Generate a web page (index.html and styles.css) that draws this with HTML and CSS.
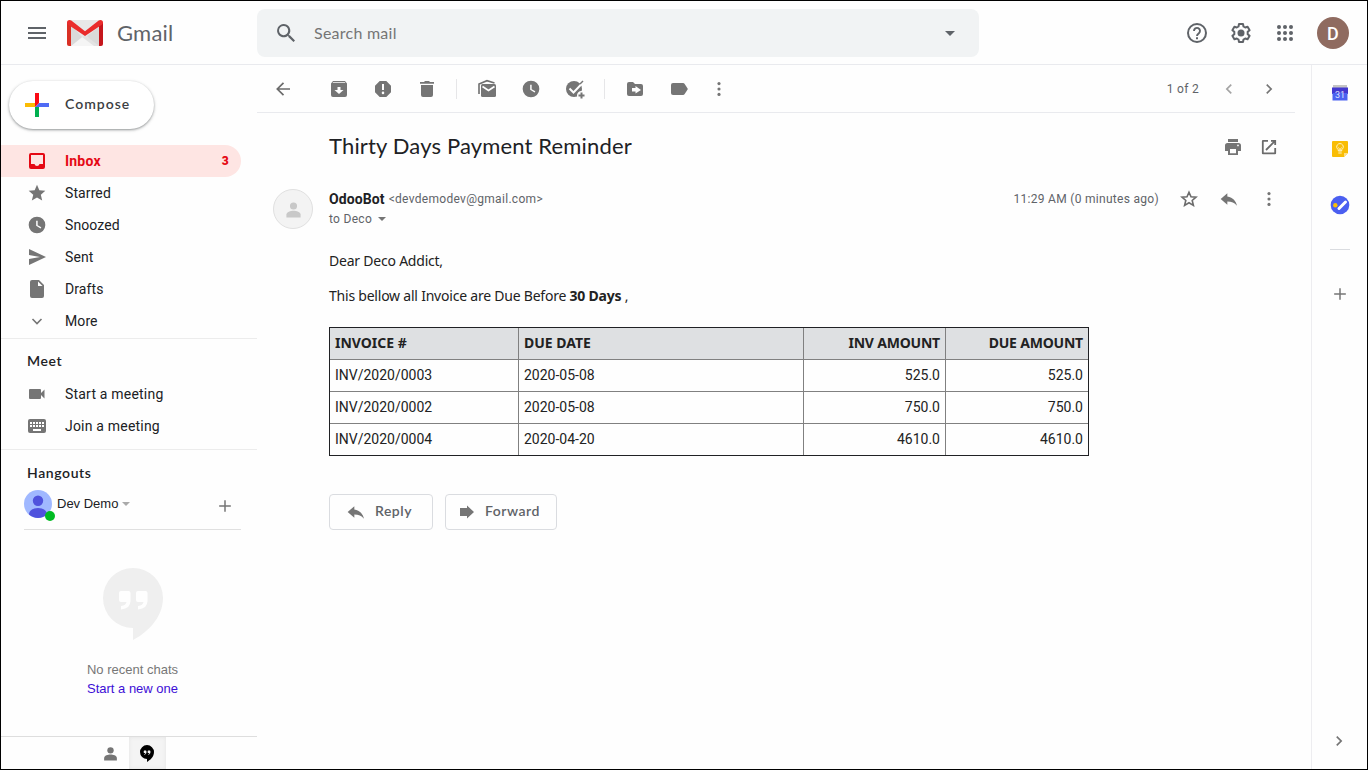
FILE: index.html
```html
<!DOCTYPE html>
<html lang="en">
<head>
<meta charset="utf-8">
<title>Thirty Days Payment Reminder - Gmail</title>
<link rel="stylesheet" href="styles.css">
</head>
<body>
<svg class="defs" aria-hidden="true">
  <symbol id="clock" viewBox="0 0 24 24"><path fill-rule="evenodd" d="M12 2a10 10 0 1 0 0 20 10 10 0 0 0 0-20zM11 7h1.800v5.200l4.400 2.600-.9 1.500L11 13z"/></symbol>
  <symbol id="dots" viewBox="0 0 24 24"><circle cx="12" cy="5.500" r="1.900"/><circle cx="12" cy="12" r="1.900"/><circle cx="12" cy="18.500" r="1.900"/></symbol>
  <symbol id="reply" viewBox="0 0 24 24"><path d="M10 9V5l-8 7 8 7v-4.100c5 0 8.900 1.600 11.500 5.100-1-5-4.500-10-11.500-11z"/></symbol>
  <symbol id="plus" viewBox="0 0 24 24"><path d="M19 12.900h-6.100V19h-1.800v-6.100H5v-1.800h6.100V5h1.800v6.100H19z"/></symbol>
  <symbol id="right" viewBox="0 0 24 24"><path d="M10 6 8.600 7.400l4.600 4.600-4.600 4.600L10 18l6-6z"/></symbol>
  <symbol id="caret" viewBox="0 0 10 5"><path d="M0 0h10L5 5z"/></symbol>
  <symbol id="person" viewBox="0 0 24 24"><circle cx="12" cy="7.500" r="4.500"/><path d="M12 13.500c-3.600 0-9 1.600-9 5V22h18v-3.500c0-3.400-5.400-5-9-5z"/></symbol>
  <symbol id="quote" viewBox="0 0 60 72"><path fill-rule="evenodd" d="M30 0a30 30 0 0 0 0 60v12c12-6 30-21 30-42A30 30 0 0 0 30 0zM18 23h7.500q2 0 2 2v8q0 7.500-9.500 8.500v-3.500q5-.5 5.500-4H18q-2 0-2-2v-7q0-2 2-2zm17 0h7.500q2 0 2 2v8q0 7.500-9.500 8.500v-3.500q5-.5 5.500-4H35q-2 0-2-2v-7q0-2 2-2z"/></symbol>
</svg>
<div class="app">
  <header class="header">
    <svg class="menu" viewBox="0 0 18 12"><path d="M0 0h18v2H0zm0 5h18v2H0zm0 5h18v2H0z"/></svg>
    <svg class="logo" viewBox="0 0 36 26">
      <path fill="#e8e8e8" d="M2 0h32v26H2z"/>
      <path fill="#f5f5f5" d="M4 26 18 15l14 11z"/>
      <path fill="#dadada" d="m4 5 11 12L4 26zM32 7v19h-4L20 16z"/>
      <path fill="#e3e3e3" d="m15 17 3-2 14 11h-5z"/>
      <path fill="#d93025" d="M0 2v22q0 2 2 2h2V5z"/>
      <path fill="#c5161c" d="M36 2v22q0 2-2 2h-2V5z"/>
      <path fill="#ea2c2c" d="M0 2.500Q0 0 2.500 0q1 0 1.800.6L18 11.200 31.700.6Q32.500 0 33.500 0 36 0 36 2.500q0 1.400-1.200 2.300L18 16 1.200 4.800Q0 3.900 0 2.500z"/>
    </svg>
    <span class="brand">Gmail</span>
    <div class="search">
      <svg class="glass" viewBox="0 0 18 18"><path fill-rule="evenodd" d="M12.900 11.300h-.9l-.3-.3a6.600 6.600 0 1 0-.7.7l.3.3v.9l5.200 5.100 1.500-1.500zM6.600 11.200a4.600 4.600 0 1 1 0-9.200 4.600 4.600 0 0 1 0 9.200z"/></svg>
      <span class="placeholder">Search mail</span>
      <svg class="search-caret"><use href="#caret"/></svg>
    </div>
    <div class="account">
      <svg class="i24" viewBox="0 0 24 24"><circle cx="12" cy="12" r="9" fill="none" stroke="#5f6368" stroke-width="2"/><path d="M9 10a3 3 0 1 1 4.900 2.200c-1.100.9-1.900 1.400-1.900 2.800" fill="none" stroke="#5f6368" stroke-width="1.900"/><path d="M11 16.200h2v2h-2z"/></svg>
      <svg class="i24" viewBox="0 0 24 24"><path d="m10 3-.5 2.500-1.700 1-2.400-.8-2 3.500 1.900 1.600v2.400l-1.900 1.600 2 3.500 2.400-.8 1.700 1L10 21h4l.5-2.500 1.700-1 2.400.8 2-3.500-1.900-1.600v-2.400l1.900-1.600-2-3.500-2.400.8-1.700-1L14 3z" fill="none" stroke="#5f6368" stroke-width="2" stroke-linejoin="round"/><circle cx="12" cy="12" r="3.500"/></svg>
      <svg class="i24" viewBox="0 0 24 24"><g><circle cx="6" cy="6" r="2"/><circle cx="12" cy="6" r="2"/><circle cx="18" cy="6" r="2"/><circle cx="6" cy="12" r="2"/><circle cx="12" cy="12" r="2"/><circle cx="18" cy="12" r="2"/><circle cx="6" cy="18" r="2"/><circle cx="12" cy="18" r="2"/><circle cx="18" cy="18" r="2"/></g></svg>
      <span class="avatar">D</span>
    </div>
  </header>
  <div class="body">
    <aside class="sidebar">
      <div class="compose">
        <svg class="i24" viewBox="0 0 24 24"><path fill="#fbbc04" d="M0 10h10v4H0z"/><path fill="#4f6bf5" d="M14 10h10v4H10z"/><path fill="#00b050" d="M10 14h4v10h-4z"/><path fill="#fa0a14" d="M10 0h4v10l-4 4z"/></svg>
        <span>Compose</span>
      </div>
      <nav class="nav">
        <div class="item active"><svg class="i20" viewBox="0 0 20 20"><path fill-rule="evenodd" d="M4 2h12q2 0 2 2v12q0 2-2 2H4q-2 0-2-2V4q0-2 2-2zm0 2v9h3.500q.5 2 2.500 2t2.500-2H16V4z"/></svg><span>Inbox</span><b class="count">3</b></div>
        <div class="item"><svg class="i20" viewBox="0 0 24 24"><path d="m12 17.300 6.200 3.700-1.600-7L22 9.200l-7.200-.6L12 2 9.200 8.600 2 9.200 7.500 14l-1.700 7z"/></svg><span>Starred</span></div>
        <div class="item"><svg class="i20"><use href="#clock"/></svg><span>Snoozed</span></div>
        <div class="item"><svg class="i20" viewBox="0 0 20 20"><path d="M2 2v6l11 2-11 2v6l17-8z"/></svg><span>Sent</span></div>
        <div class="item"><svg class="i20" viewBox="0 0 20 20"><path fill-rule="evenodd" d="M5 1h7l5 5v11q0 2-2 2H5q-2 0-2-2V3q0-2 2-2zm6 1.500V7h4.500z"/></svg><span>Drafts</span></div>
        <div class="item"><svg class="i20" viewBox="0 0 20 20"><path d="m5.500 8 4.500 4.500L14.500 8" fill="none" stroke="#757575" stroke-width="1.600"/></svg><span>More</span></div>
      </nav>
      <section class="meet">
        <h2>Meet</h2>
        <div class="item"><svg class="i20" viewBox="0 0 20 20"><path d="M3 5h10q1 0 1 1v3l3.500-3.500v9L14 11v3q0 1-1 1H3q-1 0-1-1V6q0-1 1-1z"/></svg><span>Start a meeting</span></div>
        <div class="item"><svg class="i20" viewBox="0 0 20 20"><rect x="1" y="3" width="18" height="14" rx="2"/><path fill="#fff" d="M3 6h2v2H3zm3 0h2v2H6zm3 0h2v2H9zm3 0h2v2h-2zm3 0h2v2h-2zM3 9h2v2H3zm3 0h2v2H6zm3 0h2v2H9zm3 0h2v2h-2zm3 0h2v2h-2zM6 13h8v2H6z"/></svg><span>Join a meeting</span></div>
      </section>
      <section class="hangouts">
        <h2>Hangouts</h2>
        <div class="user">
          <div class="user-pic"><svg viewBox="0 0 28 28"><circle cx="14" cy="14" r="14" fill="#a0b8ff"/><circle cx="14" cy="10.800" r="5.200" fill="#4f52dd"/><path fill="#4f52dd" d="M5 24.500c0-4 4-6.500 9-6.500s9 2.500 9 6.500A14 14 0 0 1 14 28a14 14 0 0 1-9-3.500z"/></svg><i class="online"></i></div>
          <span>Dev Demo</span>
          <svg class="user-caret"><use href="#caret"/></svg>
          <svg class="user-plus"><use href="#plus"/></svg>
        </div>
        <div class="chats">
          <svg class="bubble"><use href="#quote"/></svg>
          <p>No recent chats</p>
          <p class="link">Start a new one</p>
        </div>
      </section>
      <footer class="tabs">
        <div class="tab"><svg class="tab-person"><use href="#person"/></svg></div>
        <div class="tab selected"><svg class="tab-quote"><use href="#quote"/></svg></div>
      </footer>
    </aside>
    <main class="main">
      <div class="toolbar">
        <svg class="i20 back" viewBox="0 0 20 20"><path d="M17 10H4.500m6-6.200L4.300 10l6.200 6.200" fill="none" stroke="#6b6b6b" stroke-width="1.700"/></svg>
        <div class="tools">
          <svg class="i20" viewBox="0 0 20 20"><path fill-rule="evenodd" d="M4 2h12l2 2.500V16q0 2-2 2H4q-2 0-2-2V4.500zm.2 1.200L3.500 4h13l-.7-.8zM8.500 8v3H5.500L10 15l4.500-4h-3V8z"/></svg>
          <svg class="i20" viewBox="0 0 20 20"><path fill-rule="evenodd" d="M6.700 2h6.600L18 6.700v6.600L13.300 18H6.700L2 13.300V6.700zM9 5v6h2V5zm1 7.600a1.300 1.300 0 1 0 0 2.600 1.300 1.300 0 0 0 0-2.600z"/></svg>
          <svg class="i20" viewBox="0 0 20 20"><path d="M4 6h12v10q0 2-2 2H6q-2 0-2-2zM3 3h4l1-1h4l1 1h4v1.700H3z"/></svg>
        </div>
        <i class="sep"></i>
        <div class="tools">
          <svg class="i20" viewBox="0 0 20 20"><path d="M2 15V5l8-3.300L17.500 4" fill="none" stroke="#6f6f6f" stroke-width="1.600"/><rect x="4" y="5" width="15" height="13" rx="1.500"/><path d="m5.500 7.500 6 4 6-4" fill="none" stroke="#fff" stroke-width="1.700"/></svg>
          <svg class="i20"><use href="#clock"/></svg>
          <svg class="i20" viewBox="0 0 20 20"><circle cx="9" cy="10" r="8"/><path d="m4.500 9.500 4 4 9.500-10" fill="none" stroke="#fefefe" stroke-width="2"/><path d="m15 5 3-3" stroke="#757575" stroke-width="1.500"/><circle cx="16.500" cy="16.500" r="4.500" fill="#fefefe"/><path d="M16.500 13.500v6m-3-3h6" fill="none" stroke="#757575" stroke-width="2"/></svg>
        </div>
        <i class="sep"></i>
        <div class="tools">
          <svg class="i20" viewBox="0 0 20 20"><path fill-rule="evenodd" d="M4 3h4l2 2h6q2 0 2 2v8q0 2-2 2H4q-2 0-2-2V5q0-2 2-2zm6.500 4v2H7v3.500h3.500v2L16 11z"/></svg>
          <svg class="i20" viewBox="0 0 20 20"><path d="M4 4h10q1 0 1.700 1l3.200 5-3.200 5q-.7 1-1.700 1H4q-2 0-2-2V6q0-2 2-2z"/></svg>
          <svg class="i20 more-actions"><use href="#dots"/></svg>
        </div>
        <span class="pager">1 of 2</span>
        <svg class="i20 prev"><use href="#right"/></svg>
        <svg class="i20 next"><use href="#right"/></svg>
      </div>
      <div class="subject">
        <h1>Thirty Days Payment Reminder</h1>
        <svg class="i20" viewBox="0 0 20 20"><path fill-rule="evenodd" d="M5 2h10v3H5zM4.500 6h11Q18 6 18 8.500V14h-3v4H5v-4H2V8.500Q2 6 4.500 6zM7 12v4.200h6V12zm8-4.500A.9.900 0 1 0 15 9.300.9.900 0 0 0 15 7.500z"/></svg>
        <svg class="i20" viewBox="0 0 20 20"><path d="M9 3.900H4q-.2 0-.2.300v12q0 .2.200.2h12q.2 0 .2-.2V11M12 3.900h4.200V8M7 13l8.800-8.800" fill="none" stroke="#6b6b6b" stroke-width="1.800"/></svg>
      </div>
      <div class="sender">
        <div class="sender-pic"><svg><use href="#person"/></svg></div>
        <div class="who">
          <p class="from"><b>OdooBot</b><span>&lt;devdemodev@gmail.com&gt;</span></p>
          <p class="to"><span>to Deco</span><svg><use href="#caret"/></svg></p>
        </div>
        <div class="meta">
          <span>11:29 AM (0 minutes ago)</span>
          <svg class="i20" viewBox="0 0 20 20"><path d="m10 3.200 2 4.600 5 .4-3.800 3.300 1.200 4.900-4.400-2.600-4.400 2.600 1.200-4.900L3 8.200l5-.4z" fill="none" stroke="#6b6b6b" stroke-width="1.600"/></svg>
          <svg class="i20"><use href="#reply"/></svg>
          <svg class="i20"><use href="#dots"/></svg>
        </div>
      </div>
      <article class="message">
        <p class="hello">Dear Deco Addict,</p>
        <p class="intro">This bellow all Invoice are Due Before <b>30 Days</b> ,</p>
        <table class="invoices">
          <colgroup><col class="c-no"><col class="c-date"><col class="c-amt"><col class="c-amt"></colgroup>
          <thead><tr><th>INVOICE #</th><th>DUE DATE</th><th>INV AMOUNT</th><th>DUE AMOUNT</th></tr></thead>
          <tbody>
            <tr><td>INV/2020/0003</td><td>2020-05-08</td><td>525.0</td><td>525.0</td></tr>
            <tr><td>INV/2020/0002</td><td>2020-05-08</td><td>750.0</td><td>750.0</td></tr>
            <tr><td>INV/2020/0004</td><td>2020-04-20</td><td>4610.0</td><td>4610.0</td></tr>
          </tbody>
        </table>
        <div class="actions">
          <div class="btn reply"><svg class="i20"><use href="#reply"/></svg><span>Reply</span></div>
          <div class="btn forward"><svg class="i20" viewBox="0 0 20 20"><path d="M3 6h7V3.500l7 6.500-7 6.500V14H3z"/></svg><span>Forward</span></div>
        </div>
      </article>
    </main>
    <aside class="addons">
      <svg class="i20" viewBox="0 0 20 20"><path fill="#c4c4c4" d="M3 2h14v3H3z"/><path fill="#4338cf" d="M2 4.500h16V11H2z"/><path fill="#4c63f0" d="M2.500 10h15v7.500h-15z"/><text x="10" y="15" class="day">31</text></svg>
      <svg class="i20" viewBox="0 0 20 20"><path fill="#f9bd05" d="M3 2h14q1 0 1 1v11l-4 4H3q-1 0-1-1V3q0-1 1-1z"/><path fill="#fde08a" d="M18 14h-4v4z"/><path d="M8.300 12v-1.300a3.300 3.300 0 1 1 3.400 0V12zm0 2h3.400m-2.500-2V9.500L8.500 8.500m2.300 3.500V9.500l.7-1" fill="none" stroke="#fff3c4"/></svg>
      <svg class="i20" viewBox="0 0 20 20"><circle cx="10" cy="10" r="9.300" fill="#4b5ff0"/><path d="m9 13.500 6.500-6.500" stroke="#fff" stroke-width="3" stroke-linecap="round"/><circle cx="5.300" cy="10.300" r="2.200" fill="#fbc005"/></svg>
      <i class="rule"></i>
      <svg class="i20 add"><use href="#plus"/></svg>
      <svg class="i20 collapse"><use href="#right"/></svg>
    </aside>
  </div>
</div>
</body>
</html>
```
FILE: styles.css
```css
* { box-sizing: border-box; margin: 0; padding: 0; }
body { background: #fefefe; font-family: Roboto, "Liberation Sans", sans-serif; font-size: 14px; color: #202124; }
svg { display: block; flex: none; fill: #757575; }
.defs { position: absolute; width: 0; height: 0; }
.app { width: 1368px; height: 770px; border: 1px solid #000; display: flex; flex-direction: column; overflow: hidden; }
.i20 { width: 20px; height: 20px; }
.i24 { width: 24px; height: 24px; }
span, p, h1, h2, th, td { white-space: nowrap; }

.header { height: 64px; flex: none; border-bottom: 1px solid #e9eaee; display: flex; align-items: center; padding: 0 18px 0 27px; }
.header svg { fill: #5f6368; }
.menu { width: 18px; height: 12px; margin-right: 21px; }
.logo { width: 36px; height: 26px; }
.brand { width: 154px; padding-left: 14px; font: 22px Lato, sans-serif; color: #5f6368; letter-spacing: .2px; }
.search { width: 722px; height: 48px; margin-top: 1px; border-radius: 8px; background: #f1f3f4; display: flex; align-items: center; padding: 0 24px 0 20px; }
.glass { width: 18px; height: 18px; margin-bottom: 1px; }
.placeholder { flex: 1; padding: 0 0 2px 19px; font: 16px Lato, sans-serif; color: #757575; letter-spacing: .25px; }
.search-caret { width: 10px; height: 5px; }
.account { margin-left: auto; display: flex; align-items: center; gap: 20px; }
.avatar { width: 32px; height: 32px; border-radius: 50%; background: #8f6b60; color: #fff; font: 500 18px/33px Roboto, sans-serif; text-align: center; }

.body { flex: 1; display: flex; min-height: 0; }
.sidebar { width: 256px; display: flex; flex-direction: column; }
.compose { width: 145px; height: 48px; margin: 16px 0 16px 8px; border-radius: 24px; background: #fff; box-shadow: 0 1px 2px rgba(60,64,67,.4), 0 1px 3px 1px rgba(60,64,67,.15); display: flex; align-items: center; gap: 16px; padding-left: 16px; font: 600 14px Lato, sans-serif; color: #3c4043; letter-spacing: 1px; }
.compose span { padding-bottom: 3px; }
.item { height: 32px; width: 240px; display: flex; align-items: center; gap: 18px; padding: 0 12px 0 26px; letter-spacing: .1px; }
.item.active { background: #fee5e3; border-radius: 0 16px 16px 0; color: #e50914; font-weight: 700; letter-spacing: .2px; }
.item.active svg { fill: #e50914; }
.count { margin-left: auto; font-size: 12px; }
.nav { padding-bottom: 1px; border-bottom: 1px solid #ececec; }
h2 { font: 600 14px/18px Lato, sans-serif; padding-left: 26px; letter-spacing: .6px; }
.meet { padding: 13px 0 7px; border-bottom: 1px solid #ececec; }
.meet h2 { margin-bottom: 8px; }
.meet .item { letter-spacing: .2px; }
.hangouts { padding-top: 14px; flex: 1; }
.user { width: 217px; margin: 6px 0 0 23px; height: 42px; border-bottom: 1px solid #e0e0e0; display: flex; align-items: center; font: 13px "Liberation Sans", sans-serif; padding-bottom: 11px; }
.user-pic { width: 28px; height: 28px; margin: 2px 5px 0 0; position: relative; }
.user-pic svg { width: 28px; height: 28px; }
.online { position: absolute; left: 21px; top: 21px; width: 10px; height: 10px; border-radius: 50%; background: #0b2; }
.user-caret { width: 8px; height: 4px; margin: 1px 0 0 4px; fill: #aaa; }
.user-plus { width: 20px; height: 20px; margin: 6px 6px 0 auto; }
.chats { padding: 38px 0 0 7px; display: flex; flex-direction: column; align-items: center; font: 13px/19px "Liberation Sans", sans-serif; color: #777; }
.bubble { width: 60px; height: 72px; margin-bottom: 20px; fill: #efefef; }
.link { color: #3d0fd6; }
.tabs { height: 33px; flex: none; border-top: 1px solid #dedede; display: flex; padding-left: 91px; }
.tab { width: 37px; display: flex; align-items: center; justify-content: center; }
.tab.selected { background: #f4f4f4; box-shadow: inset 0 0 4px #e4e4e4; }
.tab-person { width: 17px; height: 17px; margin: 1px 1px 0 0; }
.tab-quote { width: 14px; height: 17px; margin: 1px 2px 0 0; fill: #000; }

.main { width: 1054px; }
.toolbar { width: 1038px; height: 48px; border-bottom: 1px solid #e9eaee; display: flex; align-items: center; padding: 0 16px; }
.back { margin-right: 36px; }
.tools { display: flex; gap: 24px; }
.sep { width: 1px; height: 20px; background: #e6e6e8; margin: 0 20px 0 19px; }
.more-actions { margin-left: -4px; }
.pager { margin-left: auto; font-size: 12px; letter-spacing: .3px; color: #5f6368; padding-right: 20px; }
.prev { transform: scaleX(-1); opacity: .65; }
.next { margin-left: 20px; }
.subject { height: 68px; width: 1022px; padding-left: 72px; display: flex; align-items: center; gap: 16px; }
h1 { flex: 1; font: 22px Lato, sans-serif; letter-spacing: .15px; padding-bottom: 3px; }
.sender { width: 1022px; height: 48px; margin-top: 3px; padding: 5px 0 0 16px; display: flex; }
.sender-pic { width: 40px; height: 40px; border-radius: 50%; border: 1px solid #e0e0e0; background: #f3f3f3; display: flex; align-items: center; justify-content: center; margin-right: 16px; }
.sender-pic svg { width: 19px; height: 19px; fill: #c8c8c8; margin-top: 1px; }
.who { font-size: 12px; letter-spacing: .3px; line-height: 20px; color: #5f6368; }
.who b { font: 700 14px/20px Roboto, sans-serif; letter-spacing: .1px; color: #202124; }
.from { height: 20px; display: flex; gap: 4px; }
.to { height: 20px; display: flex; align-items: center; gap: 6px; }
.to svg { width: 8px; height: 4px; }
.meta { margin-left: auto; height: 20px; display: flex; align-items: center; gap: 20px; font-size: 12px; letter-spacing: .3px; color: #5f6368; }

.message { padding: 19px 0 0 72px; font: 14px/20px "Noto Sans", sans-serif; letter-spacing: -.22px; color: #222; }
.intro { margin-top: 15px; }
.invoices { width: 760px; height: 129px; margin: 21px 0 38px; table-layout: fixed; border: 1px solid #202124; border-spacing: 0; font: 14px/20px Roboto, sans-serif; letter-spacing: 0; }
.c-no { width: 189px; }
.c-date { width: 285px; }
.c-amt { width: 142px; }
th, td { height: 32px; padding: 0 5px 1px; text-align: left; border-right: 1px solid #808080; border-bottom: 1px solid #808080; }
th { background: #dee0e2; font: 700 14px/20px "Noto Sans", sans-serif; padding-bottom: 2px; }
tr > :nth-child(n+3) { text-align: right; }
th:nth-child(n+3) { letter-spacing: -.2px; }
tr > :last-child { border-right: 0; }
tbody tr:last-child td { height: 31px; border-bottom: 0; }
.actions { display: flex; gap: 12px; }
.btn { height: 36px; border: 1px solid #dadce0; border-radius: 4px; display: flex; align-items: center; font: 600 14px Lato, sans-serif; letter-spacing: .5px; color: #5f6368; }
.btn span { padding-bottom: 3px; }
.btn.reply { width: 104px; padding-left: 16px; gap: 9px; }
.btn.forward { width: 112px; padding-left: 11px; gap: 8px; }

.addons { width: 56px; border-left: 1px solid #ededf0; display: flex; flex-direction: column; align-items: center; gap: 36px; padding: 18px 0; }
.day { font: 9px Roboto, sans-serif; fill: #dfe3ff; text-anchor: middle; }
.rule { width: 20px; height: 1px; background: #dadce0; margin-top: -2px; }
.add { margin-top: -2px; }
.collapse { margin: auto 2px 0 0; }
```
